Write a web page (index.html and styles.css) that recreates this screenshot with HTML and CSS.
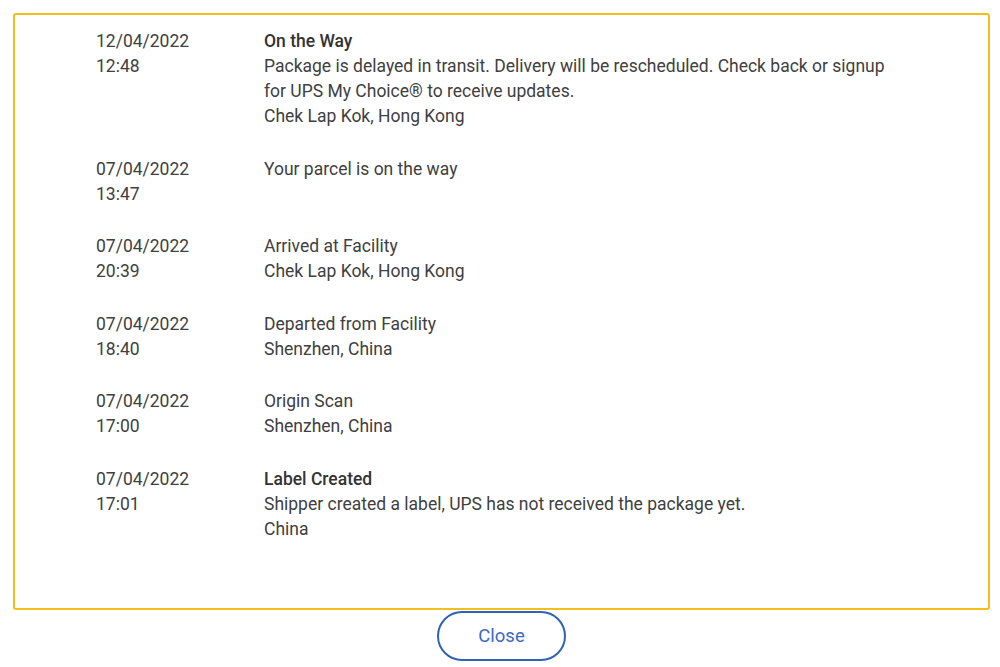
FILE: index.html
```html
<!DOCTYPE html>
<html>
<head>
<meta charset="utf-8">
<link rel="stylesheet" href="styles.css">
</head>
<body>
<div class="modal">
  <div class="panel">
    <div class="row">
      <div class="when"><div>12/04/2022</div><div>12:48</div></div>
      <div class="what">
        <div class="title">On the Way</div>
        <div>Package is delayed in transit. Delivery will be rescheduled. Check back or signup for UPS My Choice® to receive updates.</div>
        <div>Chek Lap Kok, Hong Kong</div>
      </div>
    </div>
    <div class="row">
      <div class="when"><div>07/04/2022</div><div>13:47</div></div>
      <div class="what"><div>Your parcel is on the way</div></div>
    </div>
    <div class="row">
      <div class="when"><div>07/04/2022</div><div>20:39</div></div>
      <div class="what"><div>Arrived at Facility</div><div>Chek Lap Kok, Hong Kong</div></div>
    </div>
    <div class="row">
      <div class="when"><div>07/04/2022</div><div>18:40</div></div>
      <div class="what"><div>Departed from Facility</div><div>Shenzhen, China</div></div>
    </div>
    <div class="row">
      <div class="when"><div>07/04/2022</div><div>17:00</div></div>
      <div class="what"><div>Origin Scan</div><div>Shenzhen, China</div></div>
    </div>
    <div class="row">
      <div class="when"><div>07/04/2022</div><div>17:01</div></div>
      <div class="what">
        <div class="title">Label Created</div>
        <div>Shipper created a label, UPS has not received the package yet.</div>
        <div>China</div>
      </div>
    </div>
  </div>
  <div class="actions">
    <button class="close">Close</button>
  </div>
</div>
</body>
</html>
```
FILE: styles.css
```css
html, body {
  margin: 0;
  padding: 0;
  background: #fff;
}
body {
  font-family: Roboto, "Liberation Sans", sans-serif;
  color: #404040;
}
.modal {
  padding: 13px 10px 0 13px;
}
.panel {
  box-sizing: border-box;
  width: 977px;
  height: 597px;
  border: 2px solid #f2c01c;
  border-radius: 3px;
  padding: 14px 0 0 81px;
  display: flex;
  flex-direction: column;
  gap: 27.5px;
}
.row {
  display: flex;
  font-size: 17.5px;
  line-height: 25px;
}
.when {
  width: 168px;
  flex: none;
}
.what {
  width: 630px;
}
.title {
  font-weight: 500;
  color: #333;
}
.actions {
  width: 977px;
  display: flex;
  justify-content: center;
  margin-top: 1px;
}
.close {
  box-sizing: border-box;
  width: 129px;
  height: 50px;
  border: 2px solid #3062b4;
  border-radius: 25px;
  background: #fff;
  color: #3b69c2;
  font-family: Roboto, "Liberation Sans", sans-serif;
  font-size: 18.5px;
  line-height: 44px;
  padding: 0 0 1px;
  cursor: pointer;
}
```
